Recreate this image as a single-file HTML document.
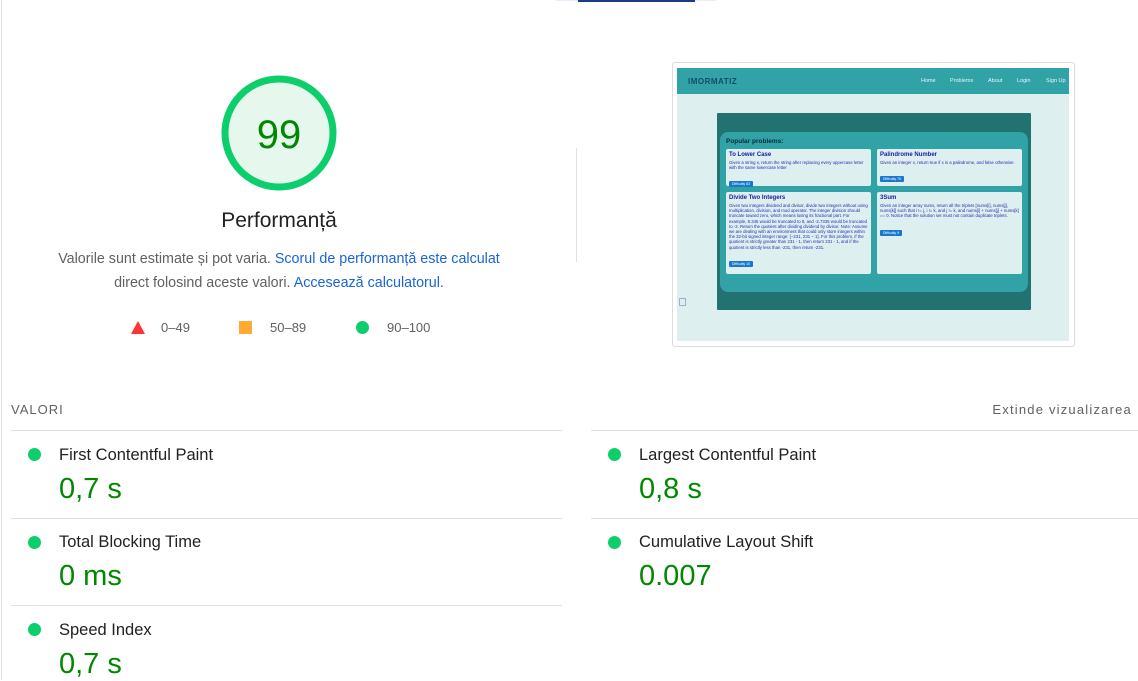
<!DOCTYPE html>
<html><head><meta charset="utf-8"><style>
*{margin:0;padding:0;box-sizing:border-box}
body{width:1138px;height:680px;overflow:hidden;background:#fff;font-family:"Liberation Sans",Arial,sans-serif;position:relative;color:#212121}
.a{position:absolute;white-space:nowrap}
.lk{color:#1a64d6}
.dot{position:absolute;width:13px;height:13px;border-radius:50%;background:#0cce6b}
.mt{font-size:16.5px;color:#212121}
.mv{font-size:29px;color:#080}
.hl{position:absolute;height:1px;background:#e0e0e0}
.sm{font-family:"Liberation Sans",sans-serif;position:absolute;white-space:nowrap}
.card{position:absolute;background:#ddf0ef;border-radius:2px}
.card b{display:block;color:#1a1aa0;font-size:6px;margin:3px 0 0 3px}
.card p{color:#2a2ab0;font-size:4.3px;line-height:5.2px;margin:2px 3px;white-space:normal}
.btn{display:inline-block;background:#1878d0;color:#fff;font-size:3.5px;padding:1px 3px;border-radius:1px;margin-left:3px}
</style></head><body>
<div class="a" style="left:1px;top:0;width:1px;height:680px;background:#e0e0e0"></div>
<div class="a" style="left:556px;top:0;width:160px;height:1px;background:#e8eef8"></div>
<div class="a" style="left:578px;top:0;width:117px;height:2px;background:#1a3a8a"></div>

<svg class="a" style="left:219px;top:73px" width="120" height="120"><circle cx="60" cy="60" r="54" fill="#e6f8ee" stroke="#0cce6b" stroke-width="7"/></svg>
<div class="a" style="left:219px;top:113px;width:120px;text-align:center;font-size:40px;color:#080">99</div>
<div class="a" style="left:179px;top:209px;width:200px;text-align:center;font-size:21px;color:#212121">Performanță</div>
<div class="a" style="left:20px;top:247px;width:518px;text-align:center;font-size:14.3px;color:#616161;line-height:24px">Valorile sunt estimate și pot varia. <span class="lk">Scorul de performanță este calculat</span><br>direct folosind aceste valori. <span class="lk">Accesează calculatorul.</span></div>
<svg class="a" style="left:130px;top:320px" width="16" height="15"><polygon points="8,1 15,14 1,14" fill="#f33"/></svg>
<div class="a" style="left:161px;top:320px;font-size:13px;color:#616161">0–49</div>
<div class="a" style="left:239px;top:321px;width:13px;height:13px;background:#fa3"></div>
<div class="a" style="left:270px;top:320px;font-size:13px;color:#616161">50–89</div>
<div class="dot" style="left:356px;top:321px"></div>
<div class="a" style="left:387px;top:320px;font-size:13px;color:#616161">90–100</div>
<div class="a" style="left:576px;top:148px;width:1px;height:114px;background:#e0e0e0"></div>

<div class="a" style="left:672px;top:62px;width:403px;height:285px;border:1px solid #ddd;border-radius:3px"></div>
<div class="a" style="left:677px;top:68px;width:392px;height:273px;background:#ddf0ef"></div>
<div class="a" style="left:677px;top:68px;width:392px;height:26px;background:#31a2a6"></div>
<div class="sm" style="left:688px;top:77px;font-size:8px;font-weight:bold;color:#1a4a6a;letter-spacing:0.5px">IMORMATIZ</div>
<div class="sm" style="left:921px;top:78px;font-size:5.5px;color:#e8f8f8">Home</div>
<div class="sm" style="left:950px;top:78px;font-size:5.5px;color:#e8f8f8">Problems</div>
<div class="sm" style="left:988px;top:78px;font-size:5.5px;color:#e8f8f8">About</div>
<div class="sm" style="left:1017px;top:78px;font-size:5.5px;color:#e8f8f8">Login</div>
<div class="sm" style="left:1046px;top:78px;font-size:5.5px;color:#e8f8f8">Sign Up</div>
<div class="a" style="left:717px;top:113px;width:314px;height:197px;background:#227272;border-radius:1px"></div>
<div class="a" style="left:720px;top:132px;width:308px;height:160px;background:#31a2a6;border-radius:8px"></div>
<div class="sm" style="left:726px;top:138px;font-size:6.5px;font-weight:bold;color:#0a2a3a">Popular problems:</div>
<div class="card" style="left:726px;top:149px;width:145px;height:37px"><b>To Lower Case</b><p>Given a string s, return the string after replacing every uppercase letter with the same lowercase letter</p><span class="btn">Difficulty 83</span></div>
<div class="card" style="left:877px;top:149px;width:145px;height:37px"><b>Palindrome Number</b><p>Given an integer x, return true if x is a palindrome, and false otherwise.</p><span class="btn">Difficulty 76</span></div>
<div class="card" style="left:726px;top:192px;width:145px;height:82px"><b>Divide Two Integers</b><p>Given two integers dividend and divisor, divide two integers without using multiplication, division, and mod operator. The integer division should truncate toward zero, which means losing its fractional part. For example, 8.345 would be truncated to 8, and -2.7335 would be truncated to -2. Return the quotient after dividing dividend by divisor. Note: Assume we are dealing with an environment that could only store integers within the 32-bit signed integer range: [−231, 231 − 1]. For this problem, if the quotient is strictly greater than 231 - 1, then return 231 - 1, and if the quotient is strictly less than -231, then return -231.</p><span class="btn">Difficulty 10</span></div>
<div class="card" style="left:877px;top:192px;width:145px;height:82px"><b>3Sum</b><p>Given an integer array nums, return all the triplets [nums[i], nums[j], nums[k]] such that i != j, i != k, and j != k, and nums[i] + nums[j] + nums[k] == 0. Notice that the solution set must not contain duplicate triplets.</p><span class="btn">Difficulty 9</span></div>
<div class="a" style="left:679px;top:298px;width:7px;height:8px;border:1px solid #aac"></div>

<div class="a" style="left:11px;top:402px;font-size:13px;color:#616161;letter-spacing:1px">VALORI</div>
<div class="a" style="left:885px;top:402px;width:247px;text-align:right;font-size:13px;color:#616161;letter-spacing:1.2px">Extinde vizualizarea</div>
<div class="hl" style="left:11px;top:430px;width:551px"></div>
<div class="hl" style="left:591px;top:430px;width:547px"></div>
<div class="hl" style="left:11px;top:518px;width:551px"></div>
<div class="hl" style="left:591px;top:518px;width:547px"></div>
<div class="hl" style="left:11px;top:605px;width:551px"></div>

<div class="dot" style="left:28px;top:448px"></div><div class="a mt" style="left:59px;top:446px">First Contentful Paint</div><div class="a mv" style="left:59px;top:473px">0,7 s</div>
<div class="dot" style="left:608px;top:448px"></div><div class="a mt" style="left:639px;top:446px">Largest Contentful Paint</div><div class="a mv" style="left:639px;top:473px">0,8 s</div>
<div class="dot" style="left:28px;top:536px"></div><div class="a mt" style="left:59px;top:533px">Total Blocking Time</div><div class="a mv" style="left:59px;top:560px">0 ms</div>
<div class="dot" style="left:608px;top:536px"></div><div class="a mt" style="left:639px;top:533px">Cumulative Layout Shift</div><div class="a mv" style="left:639px;top:560px">0.007</div>
<div class="dot" style="left:28px;top:623px"></div><div class="a mt" style="left:59px;top:621px">Speed Index</div><div class="a mv" style="left:59px;top:648px">0,7 s</div>
</body></html>
